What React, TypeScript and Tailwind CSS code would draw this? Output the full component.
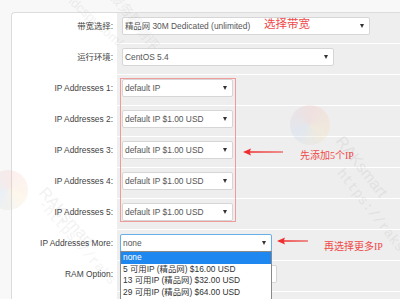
import React from 'react';

const FONT = "font-['Liberation_Sans','Noto_Sans_CJK_SC',sans-serif]";
const NOTE = "text-[10px] leading-none text-[#f04848] whitespace-nowrap font-['Liberation_Serif','Noto_Sans_CJK_SC',serif]";

function Caret() {
    return <span className="block w-0 h-0 border-l-[2.5px] border-r-[2.5px] border-t-[4px] border-l-transparent border-r-transparent border-t-[#333]" />;
}

function FakeSelect({ value, width, focused = false }: { value: string; width: string; focused?: boolean }) {
    return (
        <div
            className={`${width} shrink-0 h-[18px] bg-white rounded-[2px] border flex items-center justify-between pl-[2px] pr-[5px] text-[8.4px] text-[#555] ${
                focused ? 'border-[#66afe9] -ml-[2px]' : 'border-[#d6d6d6]'
            }`}
        >
            <span className="leading-none whitespace-nowrap">{value}</span>
            <Caret />
        </div>
    );
}

function LeftArrow({ width }: { width: number }) {
    return (
        <svg width={width} height="8" viewBox={`0 0 ${width} 8`} className="shrink-0">
            <path d={`M0 4 L8 0.5 L7 3.2 L${width} 3.6 L${width} 4.4 L7 4.8 L8 7.5 Z`} fill="#ef2f2f" />
        </svg>
    );
}

type Row = { label: string; value: string; width: string; focused?: boolean; note?: React.ReactNode };

const rows: Row[] = [
    { label: '带宽选择:', value: '精品网 30M Dedicated (unlimited)', width: 'w-[248px]' },
    { label: '运行环境:', value: 'CentOS 5.4', width: 'w-[212px]' },
    { label: 'IP Addresses 1:', value: 'default IP', width: 'w-[111px]' },
    { label: 'IP Addresses 2:', value: 'default IP $1.00 USD', width: 'w-[111px]' },
    {
        label: 'IP Addresses 3:',
        value: 'default IP $1.00 USD',
        width: 'w-[111px]',
        note: (
            <>
                <div className="ml-[10px] mt-[7px]"><LeftArrow width={40} /></div>
                <div className={`ml-[17px] mt-[10px] ${NOTE}`}>先添加5个IP</div>
            </>
        ),
    },
    { label: 'IP Addresses 4:', value: 'default IP $1.00 USD', width: 'w-[111px]' },
    { label: 'IP Addresses 5:', value: 'default IP $1.00 USD', width: 'w-[111px]' },
    {
        label: 'IP Addresses More:',
        value: 'none',
        width: 'w-[152px]',
        focused: true,
        note: (
            <>
                <div className="ml-[5px] mt-[3px]"><LeftArrow width={31} /></div>
                <div className={`ml-[16px] mt-[8px] ${NOTE}`}>再选择更多IP</div>
            </>
        ),
    },
    { label: 'RAM Option:', value: '', width: 'w-[155px]' },
    { label: '', value: '', width: '' },
];

const moreOptions = [
    '5 可用IP (精品网) $16.00 USD',
    '13 可用IP (精品网) $32.00 USD',
    '29 可用IP (精品网) $64.00 USD',
    '61 可用IP (精品网) $128.00 USD',
];

const MARK = 'absolute pointer-events-none whitespace-nowrap text-black';

export default function App() {
    return (
        <div className={`relative w-[400px] h-[299px] overflow-hidden bg-[#f8f8f8] pt-[12px] pl-[11px] ${FONT}`}>
            <div className="bg-white border-l border-t border-[#dcdcdc] rounded-tl-[4px] overflow-hidden">
                {rows.map((row, i) => (
                    <div key={i} className="flex h-[31px]">
                        <div className="w-[105px] h-[26px] flex items-center justify-end pr-[4px] text-[8.4px] text-[#444] whitespace-nowrap">
                            {row.label}
                        </div>
                        <div className="flex-1 flex items-start bg-[#eeeeee] border-b border-white pt-[4px] pl-[5px]">
                            {row.width && <FakeSelect value={row.value} width={row.width} focused={row.focused} />}
                            {row.note}
                        </div>
                    </div>
                ))}
            </div>

            {/* red box round the five IP selects */}
            <div className="absolute left-[120px] top-[78px] w-[116px] h-[144px] border-[1.5px] border-[#f09a9a]" />

            {/* note written over the bandwidth select */}
            <div className="absolute left-[264px] top-[18px] text-[11.5px] leading-none text-[#f04848] font-['Noto_Sans_CJK_SC',sans-serif]">
                选择带宽
            </div>

            {/* open dropdown of IP Addresses More */}
            <div className="absolute left-[120px] top-[251px] w-[152px] bg-white border border-[#8a8a8a] text-[8.4px] text-[#333] leading-[11.5px]">
                <div className="bg-[#1e88f0] text-white pl-[2px]">none</div>
                {moreOptions.map((opt) => (
                    <div key={opt} className="pl-[2px] whitespace-nowrap">{opt}</div>
                ))}
            </div>

            {/* faint watermarks */}
            <div className="absolute left-[290px] top-[105px] w-[40px] h-[40px] rounded-full bg-[conic-gradient(#f3b7b7,#f7dcaa,#b9d4f0,#f3b7b7)] opacity-[0.25]" />
            <div className={`${MARK} opacity-[0.05] left-[325px] top-[155px] rotate-[52deg] text-[16px]`}>RAKsmart</div>
            <div className={`${MARK} opacity-[0.05] left-[320px] top-[200px] rotate-[52deg] text-[14px] font-['Liberation_Mono',monospace]`}>https://raks</div>
            <div className="absolute left-[-12px] top-[170px] w-[40px] h-[40px] rounded-full bg-[conic-gradient(#f3b7b7,#f7dcaa,#b9d4f0,#f3b7b7)] opacity-[0.22]" />
            <div className={`${MARK} opacity-[0.05] left-[30px] top-[205px] rotate-[48deg] text-[16px]`}>RAKsmart</div>
            <div className={`${MARK} opacity-[0.045] left-[22px] top-[232px] rotate-[48deg] text-[14px] font-['Liberation_Mono',monospace]`}>-https://raks</div>
            <div className={`${MARK} opacity-[0.05] left-[62px] top-[12px] rotate-[42deg] text-[13px]`}>idcspy.com/</div>
            <div className={`${MARK} opacity-[0.05] left-[100px] top-[10px] rotate-[52deg] text-[14px] font-['Noto_Sans_CJK_SC',sans-serif]`}>服务器测评</div>
        </div>
    );
}
